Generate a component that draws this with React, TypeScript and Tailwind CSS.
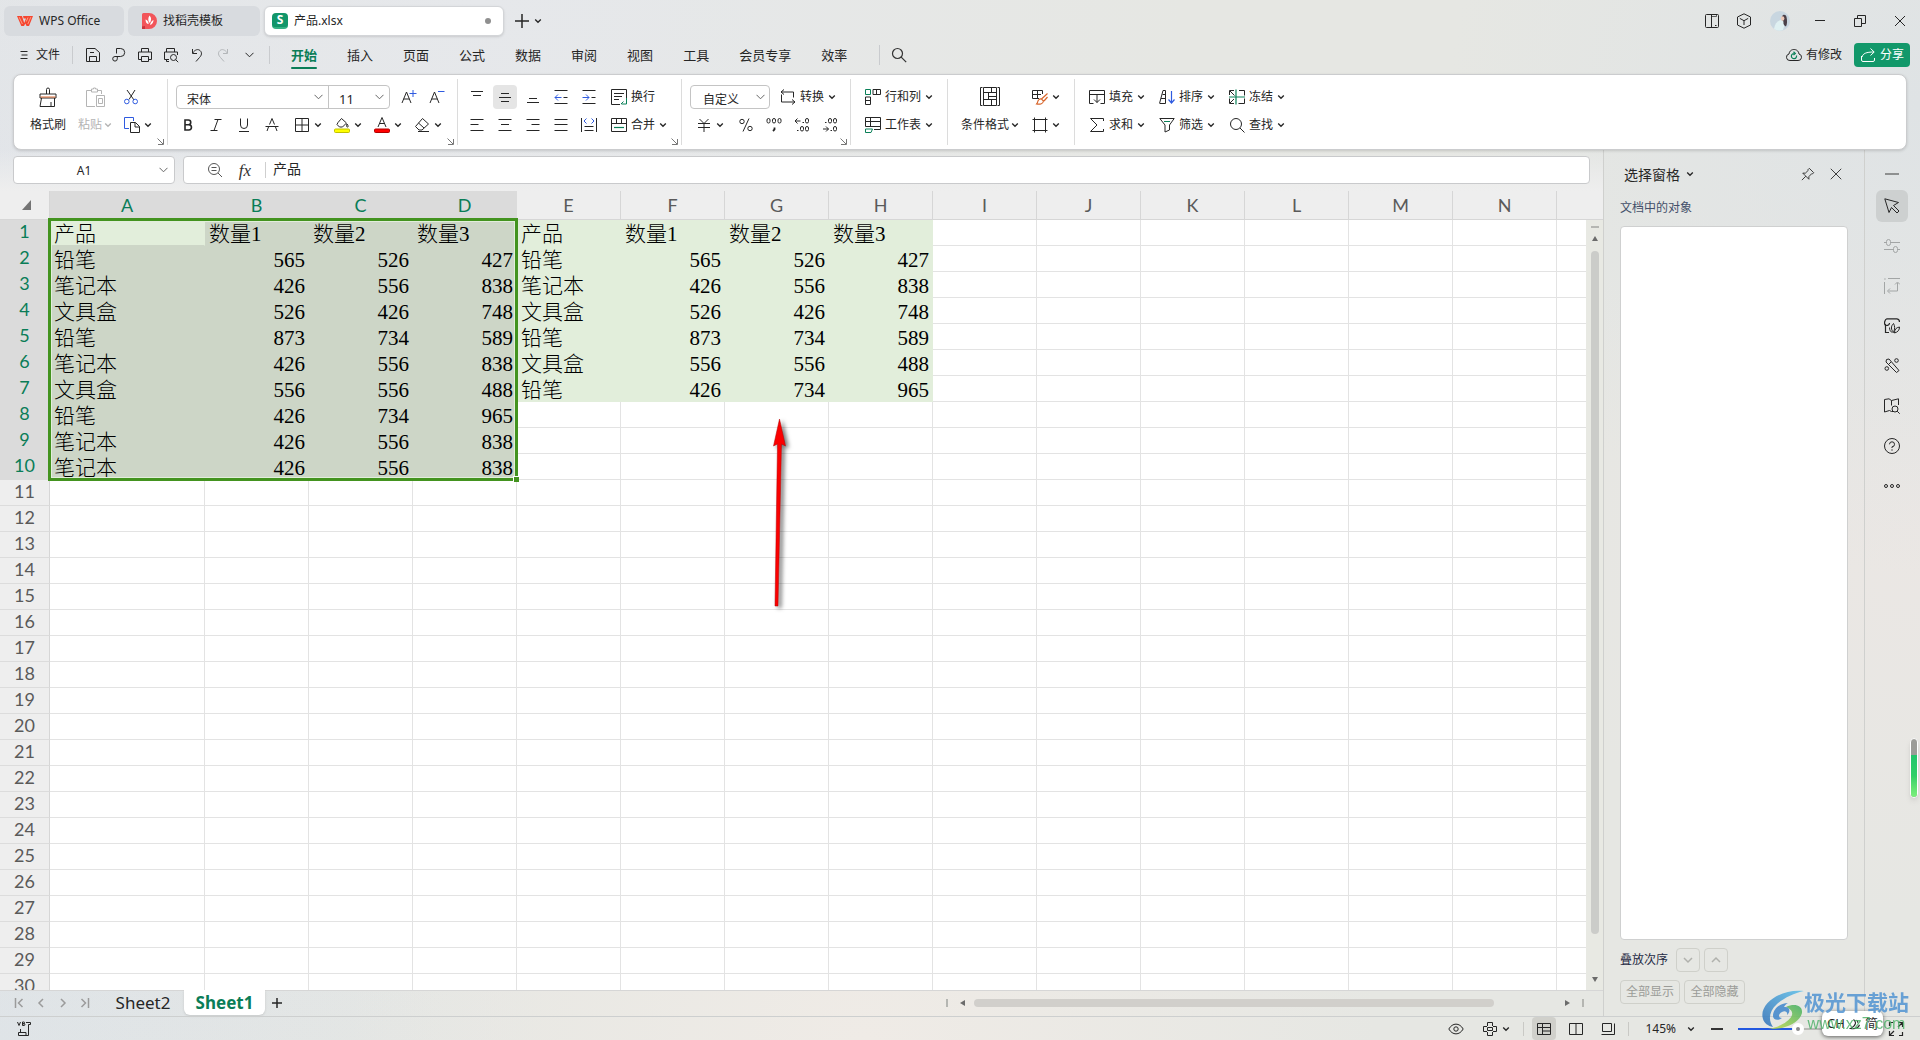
import React from "react";

type SvgProps = { size?: number; box?: number; children: React.ReactNode; className?: string; sw?: number };

function Svg({ size = 16, box = 16, children, className = "", sw = 1 }: SvgProps) {
  return (
    <svg
      width={size}
      height={size}
      viewBox={`0 0 ${box} ${box}`}
      fill="none"
      stroke="currentColor"
      strokeWidth={sw}
      className={`shrink-0 ${className}`}
      aria-hidden="true"
    >
      {children}
    </svg>
  );
}

const GREEN = "#0a8058";
const BLUE = "#2f5be0";

function Chevron({ className = "" }: { className?: string }) {
  return (
    <Svg size={8} box={8} sw={1.4} className={className}>
      <path d="M1.2 2.6 4 5.2 6.8 2.6" />
    </Svg>
  );
}

function WideChevron({ className = "" }: { className?: string }) {
  return (
    <svg width="9" height="6" viewBox="0 0 9 6" fill="none" stroke="currentColor" className={`pointer-events-none shrink-0 ${className}`} aria-hidden="true">
      <path d="M.5 .8 4.5 4.8 8.5 .8" />
    </svg>
  );
}

function IconButton({ label, active = false, children }: { label: string; active?: boolean; children: React.ReactNode }) {
  return (
    <button
      aria-label={label}
      className={`mx-0.5 flex h-6 w-6 items-center justify-center rounded ${active ? "bg-[#e5e5e5]" : ""}`}
    >
      {children}
    </button>
  );
}

function DropIcon({ label, children }: { label: string; children: React.ReactNode }) {
  return (
    <button aria-label={label} className="flex h-6 w-10 items-center gap-1 pl-2">
      {children}
      <Chevron />
    </button>
  );
}

function TextButton({ text, drop = true, children }: { text: string; drop?: boolean; children: React.ReactNode }) {
  return (
    <button className="flex h-[26px] items-center gap-1 pl-2 text-xs whitespace-nowrap">
      {children}
      <span>{text}</span>
      {drop && <Chevron />}
    </button>
  );
}

function Separator() {
  return <div className="my-1 w-px shrink-0 bg-[#dcdcdc]" />;
}

function Launcher({ label }: { label: string }) {
  return (
    <button aria-label={label} className="absolute right-[3px] bottom-1 text-[#777]">
      <Svg size={7} box={7}>
        <path d="M.5 .5 6 6M6.5 1v5.5H1" />
      </Svg>
    </button>
  );
}

function Group({ className = "", launcher, children }: { className?: string; launcher?: string; children: React.ReactNode }) {
  return (
    <div className={`relative flex shrink-0 pt-[9px] pb-[11px] ${className}`}>
      {children}
      {launcher && <Launcher label={launcher} />}
    </div>
  );
}

function Rows({ children }: { children: React.ReactNode }) {
  return <div className="flex flex-col gap-0.5">{children}</div>;
}

function Row({ className = "", children }: { className?: string; children: React.ReactNode }) {
  return <div className={`flex h-[26px] items-center ${className}`}>{children}</div>;
}

function TitleBar() {
  return (
    <header className="flex items-start gap-1 pt-1.5 pl-1">
      <button className="flex h-[30px] w-[120px] items-center gap-1.5 rounded-md bg-[#d8dbdf] pl-[13px] text-xs">
        <svg width="16" height="12" viewBox="0 0 16 12" fill="none" aria-hidden="true">
          <path d="M0 1h5l2.2 7L9 3.5H6.6L6 1h10l-4 10H9.6L8.3 8.6 7 11H4.3z" fill="#f5452f" />
          <path d="M2.2 2.2 5.4 9M13.8 2.2 10.8 9M11 2.5 9.3 6.5" stroke="#ffb59a" strokeWidth=".8" />
        </svg>
        WPS Office
      </button>
      <button className="flex h-[30px] w-[132px] items-center gap-1.5 rounded-md bg-[#d8dbdf] pl-3.5 text-xs">
        <svg width="15" height="16" viewBox="0 0 15 16" aria-hidden="true">
          <path d="M0 1.5A1.5 1.5 0 0 1 1.5 0H7a8 8 0 0 1 0 16H0z" fill="#f2555a" />
          <path d="M0 13.5 3 13v3H0z" fill="#c7343c" />
          <path d="M7.5 2.5c2.2 2 2 5 .3 7.6C5.9 8 5.8 5 7.5 2.5zM3.5 6.5c1.8.6 3 2 3.2 4.6C4.6 11 3.5 9 3.5 6.5zM11.5 7c0 2.200-1 4.200-3.400 5 .3-2.400 1.500-4 3.400-5z" fill="#fff" />
        </svg>
        找稻壳模板
      </button>
      <button className="flex h-[30px] w-60 items-center gap-1.5 rounded-md border border-[#d3d5d8] bg-white pl-[7px] text-xs shadow-sm">
        <span className="flex h-4 w-4 items-center justify-center rounded-sm border-b-2 border-[#35b184] bg-[#12966a] font-sans text-xs leading-none font-bold text-white">
          S
        </span>
        产品.xlsx
        <span className="mr-3 ml-auto h-1.5 w-1.5 rounded-full bg-[#8f8f8f]" />
      </button>
      <button aria-label="新建标签" className="ml-1.5 flex h-[30px] items-center">
        <Svg sw={1.5}>
          <path d="M1 8h14M8 1v14" />
        </Svg>
      </button>
      <button aria-label="标签列表" className="flex h-[30px] items-center">
        <Chevron />
      </button>
      <div className="ml-auto flex h-[30px] items-center">
        <button aria-label="侧栏" className="flex w-8 justify-center">
          <Svg>
            <rect x="1.5" y="1.5" width="13" height="13" rx="1" />
            <path d="M7.5 1.5v13M11 12.5h1.5" />
            <path d="M7.5 3.5h5v-2" strokeWidth=".7" />
          </Svg>
        </button>
        <button aria-label="应用" className="flex w-8 justify-center">
          <Svg>
            <path d="M8 .8 14.5 4v8L8 15.2 1.5 12V4zM3.8 5.4 8 7.7l4.2-2.3M8 7.7V12" />
          </Svg>
        </button>
        <button aria-label="账户" className="flex w-10 justify-center">
          <svg width="20" height="20" viewBox="0 0 20 20" aria-hidden="true">
            <circle cx="10" cy="10" r="10" fill="#c8d6e0" />
            <path d="M4 18c1-5 3-8 7-9l4 3-2 7a10 10 0 0 1-9-1z" fill="#dff0f2" />
            <path d="M12 5.500c1-2.500 4-2 4.500 0.500 .8 3.500.8 7-.5 9.500-2-1-3-2.500-2.500-5C12.500 10 11.500 8 12 5.500z" fill="#4a4048" />
            <ellipse cx="12.600" cy="7.500" rx="1.800" ry="2.300" fill="#ecc8b8" />
          </svg>
        </button>
        <button aria-label="最小化" className="flex w-10 justify-center">
          <Svg>
            <path d="M3 7.5h10" />
          </Svg>
        </button>
        <button aria-label="还原" className="flex w-10 justify-center">
          <Svg>
            <path d="M2.5 5.5h7v8h-7zM5.5 5.5v-3h8v8h-4" />
          </Svg>
        </button>
        <button aria-label="关闭" className="flex w-10 justify-center">
          <Svg>
            <path d="m3 3 10 10M13 3 3 13" />
          </Svg>
        </button>
      </div>
    </header>
  );
}

const menuTabs = ["插入", "页面", "公式", "数据", "审阅", "视图", "工具", "会员专享", "效率"];

function MenuBar() {
  return (
    <nav className="flex h-[38px] items-center pr-2.5">
      <button className="flex items-center gap-2 pl-5 text-xs">
        <Svg size={8} box={8}>
          <path d="M.5 .5h7M1.5 4h6M.5 7.5h7" />
        </Svg>
        文件
      </button>
      <div className="ml-3 h-[18px] w-px bg-[#c9cbce]" />
      <div className="flex items-center pl-[7px]">
        <button aria-label="保存" className="flex h-6 w-[26px] items-center justify-center">
          <Svg>
            <path d="M1.5 14.5v-13h8.5l4.5 4v9zM4.5 14.5v-5h7v5M5 5.5h4" />
          </Svg>
        </button>
        <button aria-label="输出为PDF" className="flex h-6 w-[26px] items-center justify-center">
          <Svg>
            <path d="M5.5 6.5v-5h4.2a4 4 0 0 1 0 8H4a2.3 2.3 0 1 0 2.3 2.3V9" />
          </Svg>
        </button>
        <button aria-label="打印" className="flex h-6 w-[26px] items-center justify-center">
          <Svg>
            <path d="M4.5 5V1.5h7V5M4 12.5H1.5V5h13v7.5H12M4.5 9.5h7v5h-7z" />
          </Svg>
        </button>
        <button aria-label="打印预览" className="flex h-6 w-[26px] items-center justify-center">
          <Svg>
            <path d="M3.5 5V1.5h8V5M6 12.5H1.5V5h13v3M3.5 12.5v2H6" />
            <circle cx="10.5" cy="10.5" r="3" />
            <path d="m12.7 12.7 2.5 2.5" />
          </Svg>
        </button>
        <button aria-label="撤销" className="flex h-6 w-[26px] items-center justify-center">
          <Svg>
            <path d="M3.5 2v4.5H8M3.7 6C6 2.5 9 1.8 11 3.5c2.5 2.2 1.5 5-.5 7L7 14.5" />
          </Svg>
        </button>
        <button aria-label="恢复" className="flex h-6 w-[26px] items-center justify-center text-[#b3b6b9]">
          <Svg>
            <path d="M12.5 2v4.5H8M12.3 6C10 2.5 7 1.8 5 3.5c-2.5 2.2-1.5 5 .5 7l3.5 4" />
          </Svg>
        </button>
        <button aria-label="更多" className="flex h-6 w-[26px] items-center justify-center">
          <WideChevron />
        </button>
      </div>
      <div className="ml-[7px] h-[18px] w-px bg-[#c9cbce]" />
      <div className="flex items-center pl-1.5 text-[13px]">
        <button className="relative h-7 px-[15px] pt-0.5 font-bold text-[#0a7d57]">
          开始
          <span className="absolute inset-x-[15px] bottom-0 h-0.5 rounded bg-[#0a7d57]" />
        </button>
        {menuTabs.map((t) => (
          <button key={t} className="h-7 px-[15px] pt-0.5">
            {t}
          </button>
        ))}
      </div>
      <div className="ml-[17px] h-5 w-px bg-[#c9cbce]" />
      <button aria-label="搜索" className="ml-[11px] text-[#333]">
        <Svg sw={1.2}>
          <circle cx="6.5" cy="6.5" r="5" />
          <path d="m10.2 10.2 5 5" />
        </Svg>
      </button>
      <button className="ml-auto flex items-center gap-1 text-xs">
        <Svg>
          <path d="M4 13.5A3.3 3.3 0 0 1 3 7C3.5 3.5 6 2.5 8 2.5S12.5 3.5 13 7a3.3 3.3 0 0 1-1 6.5z" />
          <path d="M10.5 8.5A2.6 2.6 0 1 1 8 6.5M7.5 4.8 9.3 6.5 7.5 8" stroke={GREEN} strokeWidth="1.2" />
        </Svg>
        有修改
      </button>
      <button className="ml-3 flex h-6 w-14 items-center justify-center gap-1 rounded bg-[#12986a] text-xs text-white">
        <Svg size={16}>
          <path d="M1.5 9v4a1.5 1.5 0 0 0 1.5 1.5h10a1.5 1.5 0 0 0 1.5-1.5v-2M2 10c1-3.5 4-5 12-5M10.5 1.5 14.2 5l-3.7 3.5" />
        </Svg>
        分享
      </button>
    </nav>
  );
}

function AlignIcon({ d }: { d: string }) {
  return (
    <Svg>
      <path d={d} />
    </Svg>
  );
}

function Ribbon() {
  return (
    <section className="relative z-10 mx-[13px] flex rounded-lg border border-[#cbccce] bg-white shadow-[0_1px_3px_rgba(0,0,0,0.15)]">
      <Group className="w-[153px] gap-3 pl-4" launcher="剪贴板">
        <button className="flex w-9 flex-col items-center gap-0.5 text-xs">
          <span className="flex h-[26px] items-center">
            <Svg size={20} box={20}>
              <path d="M8.5 7V2.5a1.5 1.5 0 0 1 3 0V7M2 7h16v4H2zM3.5 11 2 19.5h14.5V11M13 19v-4" />
              <path d="M2.5 10h15" stroke="#e2703a" />
            </Svg>
          </span>
          <span className="leading-[26px] whitespace-nowrap">格式刷</span>
        </button>
        <button className="flex w-[34px] flex-col items-center gap-0.5 text-xs text-[#b4b4b4]">
          <span className="flex h-[26px] items-center">
            <Svg size={20} box={20}>
              <path d="M6 3.5H1.5v16H10M13 3.5h3.5V7M6.5 2h2v-1h2v1h2v3h-6zM11.5 8.5h8v11h-8z" />
              <path d="M13.5 11.5h4v5h-4z" />
            </Svg>
          </span>
          <span className="flex items-center gap-0.5 leading-[26px] whitespace-nowrap">
            粘贴
            <Chevron />
          </span>
        </button>
        <Rows>
          <Row>
            <button aria-label="剪切">
              <Svg>
                <path d="m3 1 7 10M11 1 5 10.5" />
                <circle cx="2.8" cy="12.5" r="2.3" stroke={BLUE} />
                <circle cx="11.2" cy="12.5" r="2.3" stroke={BLUE} />
              </Svg>
            </button>
          </Row>
          <Row>
            <button aria-label="复制" className="flex items-center gap-1">
              <Svg>
                <path d="M5 11.5H.5v-11h9V4" stroke={BLUE} />
                <path d="M6.5 5.5h5l4 4v6h-9zM11 5.5V10h4.5" />
              </Svg>
              <Chevron />
            </button>
          </Row>
        </Rows>
      </Group>
      <Separator />
      <Group className="w-[289px] pl-1.5" launcher="字体设置">
        <Rows>
          <Row className="pl-0.5">
            <div className="mr-[5px] flex h-6 rounded border border-[#c4c4c4]">
              <div className="relative w-[152px] border-r border-[#c4c4c4]">
                <select aria-label="字体" className="h-full w-full appearance-none bg-transparent pl-2.5 text-xs outline-none">
                  <option>宋体</option>
                </select>
                <WideChevron className="absolute top-2 right-[5px] text-[#666]" />
              </div>
              <div className="relative w-[60px]">
                <select aria-label="字号" className="h-full w-full appearance-none bg-transparent pl-2.5 text-[13px] outline-none">
                  <option>11</option>
                </select>
                <WideChevron className="absolute top-2 right-[5px] text-[#666]" />
              </div>
            </div>
            <IconButton label="增大字号">
              <Svg>
                <path d="m1 14 4.5-11L10 14M2.7 10h5.6" />
                <path d="M8.5 4.5h7M12 1v7" stroke={BLUE} />
              </Svg>
            </IconButton>
            <IconButton label="减小字号">
              <Svg>
                <path d="m1 14 4.5-11L10 14M2.7 10h5.6" />
                <path d="M9 2.5h6.5" stroke={BLUE} />
              </Svg>
            </IconButton>
          </Row>
          <Row>
            <IconButton label="加粗">
              <Svg sw={1.6}>
                <path d="M5 3v10h3.800a2.600 2.600 0 0 0 0-5.300H5 8.400A2.300 2.300 0 0 0 8.400 3z" />
              </Svg>
            </IconButton>
            <IconButton label="倾斜">
              <Svg>
                <path d="M6.5 2.5h7M2.5 13.5h7M10 2.5l-4 11" />
              </Svg>
            </IconButton>
            <IconButton label="下划线">
              <Svg>
                <path d="M4.5 1.5V8a3.5 3.5 0 0 0 7 0V1.5M3 14.5h10" />
              </Svg>
            </IconButton>
            <IconButton label="删除线">
              <Svg>
                <path d="M5.5 7.5 8 1.5l2.5 6M4.5 10 3 14M11.5 10 13 14M1.5 9.5h13" />
              </Svg>
            </IconButton>
            <DropIcon label="边框">
              <Svg>
                <path d="M1.5 1.5h13v13h-13zM8 1.5v13M1.5 8h13" />
              </Svg>
            </DropIcon>
            <DropIcon label="填充颜色">
              <Svg>
                <path d="M4 5.5 7.5 1.5l5 4.5-4 4H5.5L3 7.5zM13 7c1.5 2 1.5 3 .5 3s-1.3-1-.5-3" />
                <rect x=".5" y="12" width="15" height="3.5" rx="1" fill="#ffff00" stroke="#c2c200" />
              </Svg>
            </DropIcon>
            <DropIcon label="字体颜色">
              <Svg>
                <path d="m4 10 4-9.5L12 10M5.5 6.5h5" />
                <rect x=".5" y="12" width="15" height="3.5" rx="1" fill="#ff0000" stroke="#b00000" />
              </Svg>
            </DropIcon>
            <DropIcon label="清除">
              <Svg>
                <path d="m8.5 1.5 6 5.5-6.5 6H5L1.5 9.5zM4.5 6l5.5 5M4 14.5h11" />
              </Svg>
            </DropIcon>
          </Row>
        </Rows>
      </Group>
      <Separator />
      <Group className="w-[223px] pl-[5px]" launcher="对齐设置">
        <Rows>
          <Row>
            <IconButton label="顶端对齐"><AlignIcon d="M2 2.5h12M4 6.5h8" /></IconButton>
            <IconButton label="垂直居中" active><AlignIcon d="M4 4.5h8M2 8.5h12M4 12.5h8" /></IconButton>
            <IconButton label="底端对齐"><AlignIcon d="M4 9.5h8M2 13.5h12" /></IconButton>
            <IconButton label="减少缩进">
              <Svg>
                <path d="M1.5 1.5h13M10.5 8.5h4M1.5 14.5h13" />
                <path d="M2 8.5h6.5M5 5.5 2 8.5l3 3" stroke={BLUE} />
              </Svg>
            </IconButton>
            <IconButton label="增加缩进">
              <Svg>
                <path d="M1.5 1.5h13M10.5 8.5h4M1.5 14.5h13" />
                <path d="M1.5 8.5H8M5 5.5l3 3-3 3" stroke={BLUE} />
              </Svg>
            </IconButton>
            <TextButton text="换行" drop={false}>
              <Svg>
                <path d="M9 15.5H.5V.5h15V9M3 4.5h10M3 7.5h8M3 10.5h5" />
                <path d="M15.5 9v6h-5M12.5 12.5l-2.5 2.5" stroke={GREEN} />
              </Svg>
            </TextButton>
          </Row>
          <Row>
            <IconButton label="左对齐"><AlignIcon d="M1.5 2.5h13M1.5 7.5h8M1.5 13.5h13" /></IconButton>
            <IconButton label="水平居中"><AlignIcon d="M1.5 2.5h13M4 7.5h8M1.5 13.5h13" /></IconButton>
            <IconButton label="右对齐"><AlignIcon d="M1.5 2.5h13M6.5 7.5h8M1.5 13.5h13" /></IconButton>
            <IconButton label="两端对齐"><AlignIcon d="M1.5 2.5h13M1.5 7.5h13M1.5 13.5h13" /></IconButton>
            <IconButton label="分散对齐">
              <Svg>
                <path d="M.5 1v14M15.5 1v14M3.5 9.5h9M3.5 13.5h9" />
                <path d="M5.5 1.5 3 4l2.5 2.5M10.5 1.5 13 4l-2.5 2.5" stroke={BLUE} />
              </Svg>
            </IconButton>
            <TextButton text="合并">
              <Svg>
                <path d="M.5 1.5h15v13H.5zM.5 6.5h15M5.5 1.5v5M10.5 1.5v5" />
                <path d="M3 10.5h10" stroke={GREEN} strokeWidth="1.2" />
              </Svg>
            </TextButton>
          </Row>
        </Rows>
      </Group>
      <Separator />
      <Group className="w-[168px] pl-1.5" launcher="数字格式">
        <Rows>
          <Row className="pl-0.5">
            <div className="relative mr-0.5 h-6 w-20 rounded border border-[#c4c4c4]">
              <select aria-label="数字格式" className="h-full w-full appearance-none bg-transparent pl-3 text-xs outline-none">
                <option>自定义</option>
              </select>
              <WideChevron className="absolute top-2 right-1 text-[#666]" />
            </div>
            <TextButton text="转换">
              <Svg>
                <path d="M4 .5 1 3l3 2.5M1.5 3h12v5.5M1.5 5.5V13H15M12 10.5l3 2.5-3 2.5" />
              </Svg>
            </TextButton>
          </Row>
          <Row>
            <div className="mr-1">
              <DropIcon label="货币格式">
                <Svg>
                  <path d="M3.5 2 8 6.5 12.5 2M2 6.5h12M2 10.5h12M8 6.5V15" />
                </Svg>
              </DropIcon>
            </div>
            <IconButton label="百分比">
              <Svg>
                <circle cx="4" cy="4.5" r="2.2" />
                <circle cx="12" cy="11.5" r="2.2" />
                <path d="M11 1.5 5 14.5" />
              </Svg>
            </IconButton>
            <IconButton label="千位分隔">
              <Svg>
                <rect x="1" y="1.5" width="3" height="4.5" rx="1.5" />
                <rect x="6.5" y="1.5" width="3" height="4.5" rx="1.5" />
                <rect x="12" y="1.5" width="3" height="4.5" rx="1.5" />
                <path d="M8.5 10.5v2L7 14" strokeWidth="1.8" />
              </Svg>
            </IconButton>
            <IconButton label="增加小数位">
              <Svg>
                <path d="M1 4h5.5M3.5 1.5 1 4l2.5 2.5M8.5 5.5H10M3 13.5h1.5" />
                <rect x="11.5" y="1.5" width="3" height="4.5" rx="1.5" />
                <rect x="6.5" y="9.5" width="3" height="4.5" rx="1.5" />
                <rect x="11.5" y="9.5" width="3" height="4.5" rx="1.5" />
              </Svg>
            </IconButton>
            <IconButton label="减少小数位">
              <Svg>
                <path d="M1 12h5.5M4 9.5 6.5 12 4 14.5M3 5.5h1.5M8.5 13.5H10" />
                <rect x="6.5" y="1.5" width="3" height="4.5" rx="1.5" />
                <rect x="11.5" y="1.5" width="3" height="4.5" rx="1.5" />
                <rect x="11.5" y="9.5" width="3" height="4.5" rx="1.5" />
              </Svg>
            </IconButton>
          </Row>
        </Rows>
      </Group>
      <Separator />
      <Group className="w-24 pl-1.5">
        <Rows>
          <TextButton text="行和列">
            <Svg>
              <path d="M.5 .5h5v5h-5z" stroke={GREEN} />
              <path d="M8 .5h7.5v5H8zM11.5 .5v5M.5 8h5v7.5h-5zM.5 11.5h5" />
            </Svg>
          </TextButton>
          <TextButton text="工作表">
            <Svg>
              <path d="M.5 9.5v-9h15v12H9M.5 4.5h15M5.5 .5v9M.5 9.5h15" />
              <path d="M.5 12v3.5H6L7.5 12z" stroke={GREEN} />
            </Svg>
          </TextButton>
        </Rows>
      </Group>
      <Separator />
      <Group className="w-[126px] pl-[13px]">
        <button className="mr-[5px] flex w-[58px] flex-col items-center gap-0.5 text-xs">
          <span className="flex h-[26px] items-center">
            <Svg size={20} box={20}>
              <path d="M2.5 .5h-2v18h2M17.5 .5h2v18h-2M3.5 .5h13v18h-13zM3.5 5.5h13M3.5 12.5h13M8.5 5.5v7M8.5 9.5h8M11.5 .5v5M11.5 12.5v6" />
            </Svg>
          </span>
          <span className="flex items-center gap-0.5 leading-[26px] whitespace-nowrap">
            条件格式
            <Chevron />
          </span>
        </button>
        <Rows>
          <Row>
            <DropIcon label="表格样式">
              <Svg>
                <path d="M7 9.5H.5v-8h10V5M.5 5.5H9M5.5 1.5v8" />
                <path d="M15.5 4.5 9.5 10M15.5 8 12 12M9.5 10c-2-.5-3.5 1-4 3.5l-1 1.5c3 .5 6.5 0 7-3z" stroke="#d8662c" strokeWidth="1.2" />
              </Svg>
            </DropIcon>
          </Row>
          <Row>
            <DropIcon label="单元格">
              <Svg>
                <path d="M2.5 .5v15M13.5 .5v15M.5 2.5h15M.5 13.5h15" />
              </Svg>
            </DropIcon>
          </Row>
        </Rows>
      </Group>
      <Separator />
      <Group className="gap-1.5 pl-1.5">
        <Rows>
          <TextButton text="填充">
            <Svg>
              <path d="M4.5 14.5h-4v-13h15v13h-4M.5 5.5h15M8 5.5v8M5 10.5l3 3 3-3" />
            </Svg>
          </TextButton>
          <TextButton text="求和">
            <Svg>
              <path d="M14.5 4V1.5h-13L8 8l-6.5 6.5h13V12" />
            </Svg>
          </TextButton>
        </Rows>
        <Rows>
          <TextButton text="排序">
            <Svg>
              <path d="M.5 14.5 4 1.5h2.5v13M2 9.5h4.5M1 14.5h5.5M3.5 5.5h3" />
              <path d="M12.5 2v12M9.5 10.5l3 3.5 3-3.5" stroke={BLUE} strokeWidth="1.2" />
            </Svg>
          </TextButton>
          <TextButton text="筛选">
            <Svg>
              <path d="M.8 1.5h14.4L10.5 8v5L6 15V8z" />
              <path d="M5 4.5h6" stroke={GREEN} />
            </Svg>
          </TextButton>
        </Rows>
        <Rows>
          <TextButton text="冻结">
            <Svg>
              <path d="M5 1.5H.5V6M10 1.5h5.5v5M.5 9.5v5H5M9.5 14.5h6v-5M1 2l4.5 4.5M5 10l-4 4" />
              <path d="M7 .5v15M0 8h16" stroke={GREEN} strokeWidth="1.2" />
            </Svg>
          </TextButton>
          <TextButton text="查找">
            <Svg>
              <circle cx="7" cy="7" r="5.5" />
              <path d="m11 11 4.5 4.5" />
            </Svg>
          </TextButton>
        </Rows>
      </Group>
    </section>
  );
}

function FormulaBar() {
  return (
    <div className="flex gap-2 bg-linear-to-b from-transparent to-[#eeeeee] pt-1.5 pr-[13px] pb-[7px] pl-[13px]">
      <div className="relative h-7 w-[162px] rounded border border-[#c9cacc] bg-white">
        <input aria-label="名称框" defaultValue="A1" className="h-full w-full bg-transparent pr-5 text-center text-xs outline-none" />
        <WideChevron className="absolute top-2.5 right-1.5 text-[#666]" />
      </div>
      <div className="flex h-7 flex-1 items-center rounded border border-[#c9cacc] bg-white pl-[23px]">
        <button aria-label="浏览公式结果" className="text-[#555]">
          <Svg>
            <circle cx="7" cy="7" r="5.5" />
            <path d="m11 11 4 4M4.5 5.5h5M4.5 8.5h5" />
          </Svg>
        </button>
        <button aria-label="插入函数" className="ml-3.5 w-4 font-[Liberation_Serif] text-[17px] leading-none text-[#333] italic">
          fx
        </button>
        <div className="ml-3 h-4 w-px bg-[#cfcfcf]" />
        <input aria-label="编辑栏" defaultValue="产品" className="h-full flex-1 bg-transparent pb-1 pl-[7px] text-[14px] outline-none" />
      </div>
    </div>
  );
}

const letters = ["A", "B", "C", "D", "E", "F", "G", "H", "I", "J", "K", "L", "M", "N"];

const leftData: (string | number)[][] = [
  ["产品", "数量1", "数量2", "数量3"],
  ["铅笔", 565, 526, 427],
  ["笔记本", 426, 556, 838],
  ["文具盒", 526, 426, 748],
  ["铅笔", 873, 734, 589],
  ["笔记本", 426, 556, 838],
  ["文具盒", 556, 556, 488],
  ["铅笔", 426, 734, 965],
  ["笔记本", 426, 556, 838],
  ["笔记本", 426, 556, 838],
];

const rightData: (string | number)[][] = [
  ["产品", "数量1", "数量2", "数量3"],
  ["铅笔", 565, 526, 427],
  ["笔记本", 426, 556, 838],
  ["文具盒", 526, 426, 748],
  ["铅笔", 873, 734, 589],
  ["文具盒", 556, 556, 488],
  ["铅笔", 426, 734, 965],
];

function cellClass(row: number, col: number) {
  if (row === 0 && col === 0) return "border-r-[#e2eedb] border-b-[#cdd6c7] bg-[#e2eedb]";
  if (row < 10 && col < 4) return "border-[#cdd6c7] bg-[#cdd6c7]";
  if (row < 7 && col >= 4 && col < 8) return "border-[#e2eedb] bg-[#e2eedb]";
  return "border-[#e3e3e3] bg-white";
}

function Sheet() {
  return (
    <div className="relative min-h-0 flex-1 overflow-hidden">
      <table className="w-full table-fixed border-separate border-spacing-0">
        <colgroup>
          <col className="w-[50px]" />
          <col className="w-[155px]" />
          {letters.slice(1).map((l) => (
            <col key={l} className="w-[104px]" />
          ))}
          <col />
        </colgroup>
        <thead>
          <tr className="font-[Lato] text-[18px] leading-7">
            <th className="border-r border-b border-[#d6d6d6] bg-[#eeeeee] p-0">
              <svg width="9" height="10" viewBox="0 0 9 10" className="mr-[18px] ml-auto" aria-hidden="true">
                <path d="M9 0v10H0z" fill="#737373" />
              </svg>
            </th>
            {letters.map((l, i) => (
              <th
                key={l}
                scope="col"
                className={`border-r border-b p-0 text-center font-normal ${
                  i < 4 ? "border-[#dbdbdb] bg-[#dbdbdb] text-[#0a7d57]" : "border-[#d6d6d6] bg-[#eeeeee] text-[#5a5a5a]"
                }`}
              >
                {l}
              </th>
            ))}
            <th className="border-b border-[#d6d6d6] bg-[#eeeeee] p-0" />
          </tr>
        </thead>
        <tbody>
          {Array.from({ length: 30 }, (_, r) => (
            <tr key={r}>
              <th
                scope="row"
                className={`border-r border-b border-r-[#d6d6d6] p-0 pb-[3px] text-center font-[Lato] text-[18px] leading-[22px] font-normal ${
                  r < 10 ? "border-b-[#dbdbdb] bg-[#dbdbdb] text-[#0a7d57]" : "border-b-[#dcdcdc] bg-[#eeeeee] text-[#5a5a5a]"
                }`}
              >
                {r + 1}
              </th>
              {letters.map((l, c) => {
                const v = c < 4 ? leftData[r]?.[c] : c < 8 ? rightData[r]?.[c - 4] : undefined;
                return (
                  <td
                    key={l}
                    className={`border-r border-b p-0 pt-[5px] pr-[3px] pb-px pl-1 font-[Liberation_Serif,Noto_Sans_CJK_SC,serif] text-[21px] leading-[19px] font-light text-black ${
                      typeof v === "number" ? "text-right" : "text-left"
                    } ${cellClass(r, c)}`}
                  >
                    {v}
                  </td>
                );
              })}
              <td className="border-b border-[#e3e3e3] bg-white p-0" />
            </tr>
          ))}
        </tbody>
      </table>
      <div className="pointer-events-none absolute top-[27px] left-12 h-[263px] w-[470px] border-3 border-[#43931f] shadow-[inset_0_0_0_1px_#e2eedb]" />
      <div className="absolute top-[285px] left-[513px] h-1.5 w-1.5 border-t border-l border-white bg-[#43931f]" />
      <svg width="40" height="200" viewBox="0 0 40 200" className="absolute top-[223px] left-[760px] drop-shadow-[3px_2px_2px_rgba(0,0,0,0.55)]" aria-hidden="true">
        <path d="M19.5 5 25.5 32 21.5 30 18 192h-3L17.5 30 13.5 32z" fill="#fb0000" stroke="#b30000" strokeWidth=".5" />
      </svg>
    </div>
  );
}

function VerticalScroll() {
  return (
    <div className="flex w-[17px] shrink-0 flex-col items-center bg-[#eeeeee] pt-7">
      <div className="flex w-full flex-1 flex-col items-center border-t border-[#d6d6d6] bg-[#e8e9e3] pt-1.5">
        <div className="h-0.5 w-2 bg-[#b5b6b2]" />
        <button aria-label="向上滚动" className="mt-2 text-[#6b6b6b]">
          <svg width="6" height="5" viewBox="0 0 6 5" aria-hidden="true"><path d="M3 0 6 5H0z" fill="currentColor" /></svg>
        </button>
        <div className="mt-2.5 w-2 flex-1 rounded-full bg-[#cbccc9]" />
        <button aria-label="向下滚动" className="mt-[43px] mb-2 text-[#6b6b6b]">
          <svg width="6" height="5" viewBox="0 0 6 5" aria-hidden="true"><path d="M3 5 6 0H0z" fill="currentColor" /></svg>
        </button>
      </div>
    </div>
  );
}

function NavArrow({ label, d }: { label: string; d: string }) {
  return (
    <button aria-label={label} className="flex h-5 w-[22px] items-center justify-center text-[#9b9b9b]">
      <Svg size={10} box={10} sw={1.5}>
        <path d={d} />
      </Svg>
    </button>
  );
}

function SheetTabs() {
  return (
    <div className="flex h-[26px] items-start border-t border-[#d6d6d6]">
      <div className="flex h-6 items-center pl-2">
        <NavArrow label="第一张" d="M1.5 0v10M8.5 1 4.5 5l4 4" />
        <NavArrow label="上一张" d="M7 1 3 5l4 4" />
        <NavArrow label="下一张" d="M3 1l4 4-4 4" />
        <NavArrow label="最后一张" d="M1.5 1l4 4-4 4M8.5 0v10" />
      </div>
      <button className="ml-1 h-6 w-[84px] pl-0.5 text-[17px] leading-6">Sheet2</button>
      <button className="-mt-px h-[25px] w-[81px] rounded-b-md bg-white text-[17px] leading-6 font-bold text-[#0a7d57] shadow-sm">
        Sheet1
      </button>
      <button aria-label="新建工作表" className="ml-[7px] flex h-6 items-center">
        <Svg size={10} box={10} sw={1.5}>
          <path d="M0 5h10M5 0v10" />
        </Svg>
      </button>
      <div className="ml-auto flex h-6 w-[41%] items-center pr-[19px] text-[#6b6b6b]">
        <div className="h-2 w-0.5 bg-[#b5b6b2]" />
        <button aria-label="向左滚动" className="ml-3">
          <svg width="5" height="6" viewBox="0 0 5 6" aria-hidden="true"><path d="M0 3 5 0v6z" fill="currentColor" /></svg>
        </button>
        <div className="ml-[9px] h-2 flex-1 rounded-full bg-[#d1cfcb]" />
        <button aria-label="向右滚动" className="ml-[71px]">
          <svg width="5" height="6" viewBox="0 0 5 6" aria-hidden="true"><path d="M5 3 0 0v6z" fill="currentColor" /></svg>
        </button>
        <div className="ml-3 h-2 w-0.5 bg-[#b5b6b2]" />
      </div>
    </div>
  );
}

function SelectionPane() {
  return (
    <aside className="flex w-[261px] shrink-0 flex-col border-l border-[#cfd0ce] pr-4 pl-4">
      <div className="mt-3 flex h-6 items-center pl-1">
        <button className="flex items-center gap-1.5 text-[14px]">
          选择窗格
          <Chevron />
        </button>
        <button aria-label="固定" className="ml-auto">
          <Svg size={14}>
            <path d="m9.5 1.5 5 5-1.5 1.5-1-.2L9 11v3L2 7h3l3.3-3.2L8 3zM5.5 10.5 1 15" />
          </Svg>
        </button>
        <button aria-label="关闭窗格" className="mr-[5px] ml-3.5">
          <Svg size={14}>
            <path d="m2 2 12 12M14 2 2 14" />
          </Svg>
        </button>
      </div>
      <div className="mt-3.5 flex h-4 items-center text-xs text-[#44506a]">文档中的对象</div>
      <div className="mt-2.5 flex-1 rounded border border-[#cfd0d0] bg-white" />
      <div className="mt-2 flex h-6 items-center gap-1">
        <span className="mr-1 text-xs text-[#1f2a44]">叠放次序</span>
        <button aria-label="下移一层" className="flex h-6 w-6 items-center justify-center rounded border border-[#cfd0ca] text-[#b0b1ac]">
          <Svg size={10} box={10} sw={1.5}><path d="M1 3l4 4 4-4" /></Svg>
        </button>
        <button aria-label="上移一层" className="flex h-6 w-6 items-center justify-center rounded border border-[#cfd0ca] text-[#b0b1ac]">
          <Svg size={10} box={10} sw={1.5}><path d="M1 7l4-4 4 4" /></Svg>
        </button>
      </div>
      <div className="mt-2 mb-3 flex gap-1 text-xs text-[#9b9c98]">
        <button className="h-6 w-[60px] rounded border border-[#cfd0ca]">全部显示</button>
        <button className="h-6 w-[61px] rounded border border-[#cfd0ca]">全部隐藏</button>
      </div>
    </aside>
  );
}

function SideButton({ label, active = false, muted = false, children }: { label: string; active?: boolean; muted?: boolean; children: React.ReactNode }) {
  return (
    <button
      aria-label={label}
      className={`flex h-8 w-8 items-center justify-center rounded-md ${active ? "bg-[#cdd0d0]" : ""} ${muted ? "text-[#a2a5a5]" : ""}`}
    >
      <Svg>{children}</Svg>
    </button>
  );
}

function SideBar() {
  return (
    <aside className="flex w-14 shrink-0 flex-col items-center gap-2 border-l border-[#cfd0ce] pr-px">
      <div className="mt-[23px] mb-[7px] h-0.5 w-3.5 bg-[#8e9090]" />
      <SideButton label="选择" active>
        <path d="M.8.8 14.5 4.5 9.5 7.5l5.5 5.5-2 2-5.5-5.5L5 14.5z" />
      </SideButton>
      <SideButton label="属性" muted>
        <path d="M0 4.5h2M7 4.5h9M0 11.5h9M14 11.5h2" />
        <rect x="2.5" y="1.5" width="4" height="6" rx="2" />
        <rect x="9.5" y="8.5" width="4" height="6" rx="2" />
      </SideButton>
      <SideButton label="智能排版" muted>
        <path d="M.5 4v12M4 .5h12M.2 1h1.5M13.5 5v8H4.5M11 6.5 13.500 4 16 6.5M6 10.5 3.500 13 6 15.5" />
      </SideButton>
      <SideButton label="图表">
        <path d="M1.5 6v8.5H5M1.5 7.5C-.5 5 1 1.5 3 .8h10C15 1 15.5 3 15.5 4M2 7.5C4 7.5 5.5 6.5 5.5 5" strokeWidth="1.2" />
        <path d="M9.5 14.5C11 11 11 8 9.5 5.5 6.5 8.5 7 11.5 9.5 14.5zM10.5 15C14 14 15.5 12 15.5 9 12 9.5 10.5 11.5 10.5 15zM5.5 9.5c0 2.5 1 4.5 3 5" />
      </SideButton>
      <SideButton label="工具">
        <path d="M2.5 1.5 5 1l10 11.5-2.5 2L2 4zM7 4 4.5 6.5" />
        <circle cx="12.5" cy="2.5" r="1.8" />
        <circle cx="2.8" cy="10.5" r="1.8" />
      </SideButton>
      <SideButton label="词典">
        <path d="M9 13.5H7.5L5.5 12.5.5 14V1.5L5 .8 7.5 2.5 14.5.8V7M7.5 2.5v5" />
        <circle cx="11" cy="11" r="3" />
        <path d="m13.2 13.2 2.5 2.5" />
      </SideButton>
      <SideButton label="帮助">
        <circle cx="8" cy="8" r="7.5" />
        <path d="M5.5 6.3A2.5 2.5 0 1 1 8 8.8V10M8 11.3v1.4" />
      </SideButton>
      <SideButton label="更多工具">
        <circle cx="2" cy="8" r="1.5" />
        <circle cx="8" cy="8" r="1.5" />
        <circle cx="14" cy="8" r="1.5" />
      </SideButton>
    </aside>
  );
}

function StatusBar() {
  return (
    <footer className="flex h-6 items-center border-t border-[#cdcfcf] pr-4 pl-4">
      <button aria-label="宏">
        <Svg>
          <path d="M1.5 1 3 4.5 4.5 1M6.5 1v3.500h1.500a.9.900 0 0 0 0-1.800H6.500 7.800a.8.800 0 0 0 0-1.700zM10 1.500h4.500v2h-2v11H2.500v-3h7.500v3M4.500 11.500V8" />
        </Svg>
      </button>
      <div className="ml-auto flex h-full items-center">
        <button aria-label="护眼模式">
          <Svg>
            <path d="M.8 8C4.5 1.5 11.5 1.5 15.2 8 11.5 14.5 4.5 14.5.8 8z" />
            <circle cx="8" cy="8" r="2.2" />
          </Svg>
        </button>
        <button aria-label="阅读布局" className="ml-[18px] flex items-center gap-1">
          <Svg>
            <path d="M5.5 5V1.5h5V5M5.5 11v3.5h5V11M5 5.5H1.5v5H5M11 5.5h3.5v5H11M5.5 6.5h5v3h-5z" />
          </Svg>
          <Chevron />
        </button>
        <div className="mx-[13px] mr-2 h-3.5 w-px bg-[#c9c9c5]" />
        <button aria-label="普通视图" className="flex h-full w-6 items-center justify-center rounded bg-[#d0d0cb]">
          <Svg><path d="M1.5 2.5h13v11h-13zM1.5 6.5h13M6.5 2.5v11M6.5 10h8" /></Svg>
        </button>
        <button aria-label="分页预览" className="ml-2 flex h-full w-6 items-center justify-center">
          <Svg><path d="M1.5 2.5h13v11h-13zM8 2.5v11" /></Svg>
        </button>
        <button aria-label="页面布局" className="ml-2 flex h-full w-6 items-center justify-center">
          <Svg><path d="M2.5 2.5h9v8h-9zM14.5 2.5v11h-13" /></Svg>
        </button>
        <div className="mr-4 ml-2 h-3.5 w-px bg-[#c9c9c5]" />
        <button className="flex items-center gap-[11px] text-xs">
          145%
          <Chevron />
        </button>
        <button aria-label="缩小" className="mr-[15px] ml-4 h-0.5 w-3 bg-[#333]" />
        <input
          type="range"
          aria-label="缩放比例"
          defaultValue={50}
          className="h-0.5 w-[120px] appearance-none bg-[linear-gradient(to_right,#2358e0_50%,#b9bab6_50%)] [&::-webkit-slider-thumb]:h-3 [&::-webkit-slider-thumb]:w-3 [&::-webkit-slider-thumb]:appearance-none [&::-webkit-slider-thumb]:rounded-full [&::-webkit-slider-thumb]:border-4 [&::-webkit-slider-thumb]:border-white [&::-webkit-slider-thumb]:bg-[#8b8b8b]"
        />
        <button aria-label="放大" className="mr-3.5 ml-1">
          <Svg size={12} box={12} sw={1.5}><path d="M0 6h12M6 0v12" /></Svg>
        </button>
        <button aria-label="全屏">
          <Svg sw={1.2}>
            <path d="M10 1.5h4.5V6M14.5 1.5 10 6M6 14.5H1.5V10M1.5 14.5 6 10M1.5 5V1.5H5M14.5 11v3.5H11" />
          </Svg>
        </button>
      </div>
    </footer>
  );
}

function Overlays() {
  return (
    <>
      <div className="absolute top-[738px] right-[2px] z-20 h-[60px] w-2 overflow-hidden rounded-full border border-white bg-[#9c9c98] pt-4 shadow-md">
        <div className="h-full bg-linear-to-b from-[#22c56c] via-[#2fd068] to-[#7cf07c]" />
      </div>
      <div className="absolute right-[37px] bottom-1 z-20 flex h-[25px] w-[61px] items-center justify-center gap-1 rounded-md bg-white text-[13px] shadow-[0_1px_4px_rgba(0,0,0,0.6)]">
        <span>CH</span>
        <Svg size={12}>
          <path d="M6 2c4 3 4 8-4 12 7 1 11-2 12-5M10 3c2 1 2 2 1 3" strokeWidth="1.5" />
        </Svg>
        <span>简</span>
      </div>
      <div className="pointer-events-none absolute right-[11px] bottom-1.5 z-30 flex items-start opacity-85">
        <svg width="44" height="42" viewBox="0 0 44 42" aria-hidden="true">
          <defs>
            <linearGradient id="wmBlue" x1="0" y1="1" x2="1" y2="0">
              <stop offset="0" stopColor="#2f6fb8" />
              <stop offset="1" stopColor="#5cc0ea" />
            </linearGradient>
            <linearGradient id="wmGreen" x1="0" y1="1" x2="1" y2="0">
              <stop offset="0" stopColor="#c6dc4a" />
              <stop offset="1" stopColor="#3fae62" />
            </linearGradient>
          </defs>
          <path d="M42 1C20-2-4 14 1 29c1 4 5 7 10 8-5-7-4-16 4-23C22 8 32 3 42 1z" fill="url(#wmBlue)" />
          <path d="M24 17c8-4 17-2 16 6-2 9-16 17-34 16 12-2 22-8 24-14 1-4-2-6-6-8z" fill="url(#wmGreen)" />
          <path d="M26 13c-8 0-15 6-15 13 0 4 5 5 9 2-4 0-4-4 0-6 3-2 6 0 5 3 4-3 3-9-3-8 1-2 2-3 4-4z" fill="#3f86cc" />
        </svg>
        <div className="-ml-0.5 flex flex-col items-center">
          <span className="text-[21px] leading-[24px] font-bold text-[#5294d2]">极光下载站</span>
          <span className="font-[Liberation_Sans] text-[16px] leading-[20px] text-[#52b26c]">www.xz7.com</span>
        </div>
      </div>
    </>
  );
}

export default function App() {
  return (
    <div className="relative flex h-screen flex-col overflow-hidden bg-[#e6e7e3] bg-[radial-gradient(circle_at_100%_10%,#dfe3e5_0%,transparent_22%),radial-gradient(circle_at_25%_0%,#e6e8eb_0%,transparent_40%),radial-gradient(circle_at_0%_30%,#dfe3e9_0%,transparent_40%),radial-gradient(circle_at_45%_100%,#efebe6_0%,transparent_35%),radial-gradient(circle_at_0%_100%,#dfe4e7_0%,transparent_25%),radial-gradient(circle_at_100%_50%,#ebe7e4_0%,transparent_20%)] font-[Noto_Sans,Noto_Sans_CJK_SC,sans-serif] text-[#262626]">
      <TitleBar />
      <MenuBar />
      <Ribbon />
      <main className="flex min-h-0 flex-1">
        <div className="flex min-w-0 flex-1 flex-col">
          <FormulaBar />
          <div className="flex min-h-0 flex-1">
            <Sheet />
            <VerticalScroll />
          </div>
          <SheetTabs />
        </div>
        <SelectionPane />
        <SideBar />
      </main>
      <StatusBar />
      <Overlays />
    </div>
  );
}
